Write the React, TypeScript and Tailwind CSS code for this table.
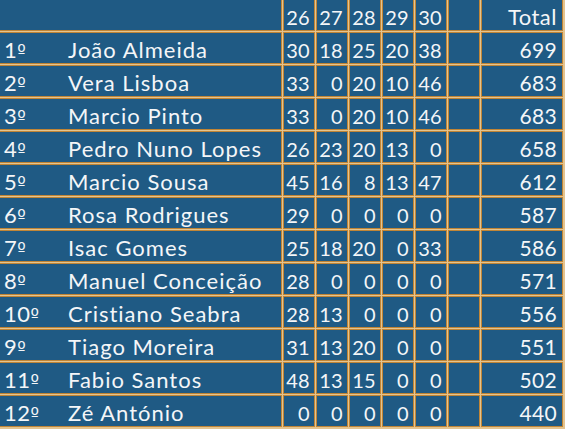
const days = ["26", "27", "28", "29", "30"];

const rows: { pos: string; name: string; scores: number[]; total: number }[] = [
  { pos: "1", name: "João Almeida", scores: [30, 18, 25, 20, 38], total: 699 },
  { pos: "2", name: "Vera Lisboa", scores: [33, 0, 20, 10, 46], total: 683 },
  { pos: "3", name: "Marcio Pinto", scores: [33, 0, 20, 10, 46], total: 683 },
  { pos: "4", name: "Pedro Nuno Lopes", scores: [26, 23, 20, 13, 0], total: 658 },
  { pos: "5", name: "Marcio Sousa", scores: [45, 16, 8, 13, 47], total: 612 },
  { pos: "6", name: "Rosa Rodrigues", scores: [29, 0, 0, 0, 0], total: 587 },
  { pos: "7", name: "Isac Gomes", scores: [25, 18, 20, 0, 33], total: 586 },
  { pos: "8", name: "Manuel Conceição", scores: [28, 0, 0, 0, 0], total: 571 },
  { pos: "10", name: "Cristiano Seabra", scores: [28, 13, 0, 0, 0], total: 556 },
  { pos: "9", name: "Tiago Moreira", scores: [31, 13, 20, 0, 0], total: 551 },
  { pos: "11", name: "Fabio Santos", scores: [48, 13, 15, 0, 0], total: 502 },
  { pos: "12", name: "Zé António", scores: [0, 0, 0, 0, 0], total: 440 },
];

// cell ring + lighter gap gives the excel-style double line
const cell =
  "bg-[#1f5a84] shadow-[0_0_0_1px_#c08536] flex items-center leading-none pt-[3px]";

export default function App() {
  return (
    <div className="w-[565px] h-[429px] bg-white overflow-hidden font-['Lato',sans-serif] text-[20px] text-[#f4f6f8]">
      <div className="grid grid-cols-[281px_repeat(6,30px)_80px] grid-rows-[30px_repeat(12,30px)] gap-[3px] pr-[3px] pb-[3px] bg-[#e4c48f] w-[565px]">
        <div className={cell} />
        {days.map((d) => (
          <div key={d} className={`${cell} justify-end pr-[4px] tracking-[0.3px]`}>
            {d}
          </div>
        ))}
        <div className={cell} />
        <div className={`${cell} justify-end pr-[5px] text-[22px] tracking-[0.5px]`}>Total</div>

        {rows.map((r) => (
          <div key={r.name} className="contents">
            <div className={`${cell} text-[22px]`}>
              <span className="w-[68px] pl-[4px] tracking-[0.5px]">
                {r.pos}
                <span className="font-['DejaVu_Sans',sans-serif] text-[18px]">º</span>
              </span>
              <span className="tracking-[1px]">{r.name}</span>
            </div>
            {r.scores.map((s, i) => (
              <div key={i} className={`${cell} justify-end pr-[4px] tracking-[0.3px]`}>
                {s}
              </div>
            ))}
            <div className={cell} />
            <div className={`${cell} justify-end pr-[5px] text-[21px] tracking-[0.3px]`}>{r.total}</div>
          </div>
        ))}
      </div>
    </div>
  );
}
